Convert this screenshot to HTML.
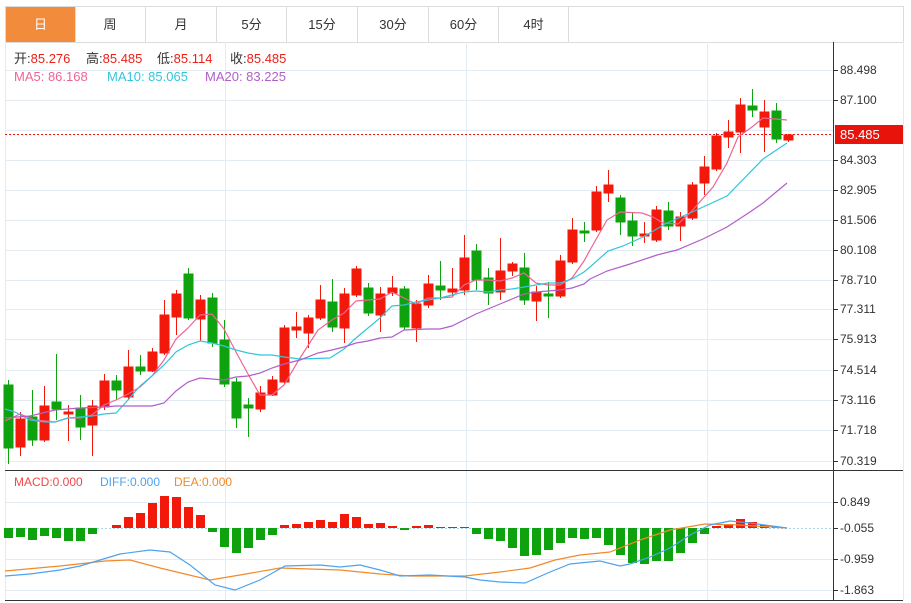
<!DOCTYPE html>
<html><head><meta charset="utf-8"><style>
body{margin:0;background:#fff;width:911px;height:603px;overflow:hidden;font-family:"Liberation Sans","Noto Sans CJK SC",sans-serif;}
.tabs{position:absolute;left:5px;top:6px;width:897px;height:35px;border:1px solid #dcdcdc;}
.tab{position:absolute;top:0;height:35px;line-height:35px;text-align:center;font-size:13px;color:#333;border-right:1px solid #dcdcdc;}
.tab.a{background:#f28c3c;color:#fff;}
svg{position:absolute;left:0;top:0}
</style></head><body>
<div class="tabs">
<div class="tab a" style="left:0;width:69px">日</div>
<div class="tab" style="left:69px;width:70px">周</div>
<div class="tab" style="left:140px;width:70px">月</div>
<div class="tab" style="left:211px;width:69px">5分</div>
<div class="tab" style="left:281px;width:70px">15分</div>
<div class="tab" style="left:352px;width:70px">30分</div>
<div class="tab" style="left:423px;width:69px">60分</div>
<div class="tab" style="left:493px;width:69px">4时</div>
</div>
<svg width="911" height="603" viewBox="0 0 911 603" font-family="Liberation Sans, Noto Sans CJK SC, sans-serif">
<g stroke="#e3ebf3" stroke-width="1">
<line x1="5" x2="833" y1="70.5" y2="70.5"/><line x1="5" x2="833" y1="100.5" y2="100.5"/><line x1="5" x2="833" y1="130.5" y2="130.5"/><line x1="5" x2="833" y1="160.5" y2="160.5"/><line x1="5" x2="833" y1="190.5" y2="190.5"/><line x1="5" x2="833" y1="220.5" y2="220.5"/><line x1="5" x2="833" y1="250.5" y2="250.5"/><line x1="5" x2="833" y1="280.5" y2="280.5"/><line x1="5" x2="833" y1="309.5" y2="309.5"/><line x1="5" x2="833" y1="339.5" y2="339.5"/><line x1="5" x2="833" y1="370.5" y2="370.5"/><line x1="5" x2="833" y1="400.5" y2="400.5"/><line x1="5" x2="833" y1="430.5" y2="430.5"/><line x1="5" x2="833" y1="461.5" y2="461.5"/>
<line x1="5" x2="833" y1="502.5" y2="502.5"/><line x1="5" x2="833" y1="559.5" y2="559.5"/><line x1="5" x2="833" y1="590.5" y2="590.5"/>
<line x1="225.5" x2="225.5" y1="42" y2="600"/><line x1="466.5" x2="466.5" y1="42" y2="600"/><line x1="707.5" x2="707.5" y1="42" y2="600"/>
<line x1="5.5" x2="5.5" y1="42" y2="600"/><line x1="903.5" x2="903.5" y1="42" y2="600"/>
</g>
<line x1="5" x2="833" y1="528.5" y2="528.5" stroke="#a8d8ee" stroke-dasharray="2,2"/>
<line x1="5" x2="903" y1="470.5" y2="470.5" stroke="#333"/>
<line x1="5" x2="903" y1="600.5" y2="600.5" stroke="#333"/>
<line x1="833.5" x2="833.5" y1="42" y2="600" stroke="#333"/>
<g stroke="#333"><line x1="833" x2="838" y1="70.5" y2="70.5"/><line x1="833" x2="838" y1="100.5" y2="100.5"/><line x1="833" x2="838" y1="160.5" y2="160.5"/><line x1="833" x2="838" y1="190.5" y2="190.5"/><line x1="833" x2="838" y1="220.5" y2="220.5"/><line x1="833" x2="838" y1="250.5" y2="250.5"/><line x1="833" x2="838" y1="280.5" y2="280.5"/><line x1="833" x2="838" y1="309.5" y2="309.5"/><line x1="833" x2="838" y1="339.5" y2="339.5"/><line x1="833" x2="838" y1="370.5" y2="370.5"/><line x1="833" x2="838" y1="400.5" y2="400.5"/><line x1="833" x2="838" y1="430.5" y2="430.5"/><line x1="833" x2="838" y1="461.5" y2="461.5"/><line x1="833" x2="838" y1="502.5" y2="502.5"/><line x1="833" x2="838" y1="528.5" y2="528.5"/><line x1="833" x2="838" y1="559.5" y2="559.5"/><line x1="833" x2="838" y1="590.5" y2="590.5"/></g>
<g font-size="12" fill="#333">
<text x="840" y="74">88.498</text><text x="840" y="104">87.100</text><text x="840" y="164">84.303</text><text x="840" y="194">82.905</text><text x="840" y="224">81.506</text><text x="840" y="254">80.108</text><text x="840" y="284">78.710</text><text x="840" y="313">77.311</text><text x="840" y="343">75.913</text><text x="840" y="374">74.514</text><text x="840" y="404">73.116</text><text x="840" y="434">71.718</text><text x="840" y="465">70.319</text>
<text x="840" y="506">0.849</text><text x="840" y="532">-0.055</text><text x="840" y="563">-0.959</text><text x="840" y="594">-1.863</text>
</g>
<line x1="5" x2="833" y1="134.5" y2="134.5" stroke="#f01010" stroke-dasharray="2,2"/>
<rect x="835" y="125" width="68" height="19" fill="#e8140c"/>
<text x="840" y="139" font-size="13" fill="#fff">85.485</text>
<g font-size="13">
<text x="14" y="63" fill="#333">开:<tspan fill="#f01e14">85.276</tspan></text>
<text x="86" y="63" fill="#333">高:<tspan fill="#f01e14">85.485</tspan></text>
<text x="157" y="63" fill="#333">低:<tspan fill="#f01e14">85.114</tspan></text>
<text x="230" y="63" fill="#333">收:<tspan fill="#f01e14">85.485</tspan></text>
<text x="14" y="81" fill="#f06493">MA5: 86.168</text>
<text x="107" y="81" fill="#33c5dc">MA10: 85.065</text>
<text x="205" y="81" fill="#b15ec9">MA20: 83.225</text>
</g>
<g font-size="12">
<text x="14" y="486" fill="#f04848">MACD:0.000</text>
<text x="100" y="486" fill="#4da3ef">DIFF:0.000</text>
<text x="174" y="486" fill="#f08a2a">DEA:0.000</text>
</g>
<g stroke-width="1">
<g stroke="#0ea20e" fill="#0ea20e">
<line x1="8.5" x2="8.5" y1="380" y2="464"/><rect x="4" y="385" width="9" height="63"/>
<line x1="32.5" x2="32.5" y1="390" y2="446"/><rect x="28" y="417" width="9" height="23"/>
<line x1="56.5" x2="56.5" y1="354" y2="420"/><rect x="52" y="402" width="9" height="7"/>
<line x1="80.5" x2="80.5" y1="395" y2="440"/><rect x="76" y="408" width="9" height="19"/>
<line x1="116.5" x2="116.5" y1="375" y2="400"/><rect x="112" y="381" width="9" height="9"/>
<line x1="140.5" x2="140.5" y1="355" y2="375"/><rect x="136" y="367" width="9" height="4"/>
<line x1="188.5" x2="188.5" y1="268" y2="320"/><rect x="184" y="274" width="9" height="44"/>
<line x1="212.5" x2="212.5" y1="293" y2="347"/><rect x="208" y="298" width="9" height="45"/>
<line x1="224.5" x2="224.5" y1="320" y2="387"/><rect x="220" y="340" width="9" height="44"/>
<line x1="236.5" x2="236.5" y1="378" y2="428"/><rect x="232" y="382" width="9" height="36"/>
<line x1="248.5" x2="248.5" y1="398" y2="437"/><rect x="244" y="405" width="9" height="3"/>
<line x1="332.5" x2="332.5" y1="279" y2="332"/><rect x="328" y="302" width="9" height="25"/>
<line x1="368.5" x2="368.5" y1="283" y2="316"/><rect x="364" y="288" width="9" height="25"/>
<line x1="404.5" x2="404.5" y1="286" y2="330"/><rect x="400" y="289" width="9" height="38"/>
<line x1="440.5" x2="440.5" y1="261" y2="300"/><rect x="436" y="286" width="9" height="4"/>
<line x1="476.5" x2="476.5" y1="244" y2="290"/><rect x="472" y="251" width="9" height="29"/>
<line x1="488.5" x2="488.5" y1="268" y2="305"/><rect x="484" y="278" width="9" height="15"/>
<line x1="524.5" x2="524.5" y1="253" y2="305"/><rect x="520" y="268" width="9" height="32"/>
<line x1="548.5" x2="548.5" y1="282" y2="318"/><rect x="544" y="294" width="9" height="2"/>
<line x1="584.5" x2="584.5" y1="222" y2="242"/><rect x="580" y="231" width="9" height="2"/>
<line x1="620.5" x2="620.5" y1="195" y2="235"/><rect x="616" y="198" width="9" height="24"/>
<line x1="632.5" x2="632.5" y1="213" y2="246"/><rect x="628" y="221" width="9" height="15"/>
<line x1="668.5" x2="668.5" y1="202" y2="230"/><rect x="664" y="211" width="9" height="15"/>
<line x1="752.5" x2="752.5" y1="89" y2="117"/><rect x="748" y="106" width="9" height="4"/>
<line x1="776.5" x2="776.5" y1="103" y2="143"/><rect x="772" y="111" width="9" height="28"/>
</g>
<g stroke="#f2190b" fill="#f2190b">
<line x1="20.5" x2="20.5" y1="412" y2="456"/><rect x="16" y="419" width="9" height="28"/>
<line x1="44.5" x2="44.5" y1="386" y2="442"/><rect x="40" y="406" width="9" height="34"/>
<line x1="68.5" x2="68.5" y1="405" y2="441"/><rect x="64" y="412" width="9" height="2"/>
<line x1="92.5" x2="92.5" y1="400" y2="456"/><rect x="88" y="406" width="9" height="19"/>
<line x1="104.5" x2="104.5" y1="374" y2="410"/><rect x="100" y="381" width="9" height="26"/>
<line x1="128.5" x2="128.5" y1="350" y2="400"/><rect x="124" y="367" width="9" height="30"/>
<line x1="152.5" x2="152.5" y1="348" y2="372"/><rect x="148" y="352" width="9" height="19"/>
<line x1="164.5" x2="164.5" y1="300" y2="355"/><rect x="160" y="315" width="9" height="38"/>
<line x1="176.5" x2="176.5" y1="290" y2="335"/><rect x="172" y="294" width="9" height="23"/>
<line x1="200.5" x2="200.5" y1="295" y2="341"/><rect x="196" y="300" width="9" height="19"/>
<line x1="260.5" x2="260.5" y1="386" y2="412"/><rect x="256" y="393" width="9" height="16"/>
<line x1="272.5" x2="272.5" y1="376" y2="396"/><rect x="268" y="380" width="9" height="15"/>
<line x1="284.5" x2="284.5" y1="325" y2="384"/><rect x="280" y="328" width="9" height="54"/>
<line x1="296.5" x2="296.5" y1="312" y2="338"/><rect x="292" y="327" width="9" height="3"/>
<line x1="308.5" x2="308.5" y1="315" y2="348"/><rect x="304" y="318" width="9" height="15"/>
<line x1="320.5" x2="320.5" y1="285" y2="320"/><rect x="316" y="300" width="9" height="18"/>
<line x1="344.5" x2="344.5" y1="288" y2="343"/><rect x="340" y="294" width="9" height="34"/>
<line x1="356.5" x2="356.5" y1="266" y2="297"/><rect x="352" y="269" width="9" height="26"/>
<line x1="380.5" x2="380.5" y1="287" y2="332"/><rect x="376" y="294" width="9" height="21"/>
<line x1="392.5" x2="392.5" y1="276" y2="296"/><rect x="388" y="288" width="9" height="5"/>
<line x1="416.5" x2="416.5" y1="300" y2="342"/><rect x="412" y="304" width="9" height="24"/>
<line x1="428.5" x2="428.5" y1="275" y2="308"/><rect x="424" y="284" width="9" height="21"/>
<line x1="452.5" x2="452.5" y1="268" y2="296"/><rect x="448" y="289" width="9" height="3"/>
<line x1="464.5" x2="464.5" y1="235" y2="295"/><rect x="460" y="258" width="9" height="32"/>
<line x1="500.5" x2="500.5" y1="238" y2="300"/><rect x="496" y="271" width="9" height="21"/>
<line x1="512.5" x2="512.5" y1="262" y2="276"/><rect x="508" y="264" width="9" height="7"/>
<line x1="536.5" x2="536.5" y1="286" y2="321"/><rect x="532" y="292" width="9" height="9"/>
<line x1="560.5" x2="560.5" y1="255" y2="298"/><rect x="556" y="261" width="9" height="35"/>
<line x1="572.5" x2="572.5" y1="218" y2="264"/><rect x="568" y="230" width="9" height="32"/>
<line x1="596.5" x2="596.5" y1="186" y2="232"/><rect x="592" y="192" width="9" height="38"/>
<line x1="608.5" x2="608.5" y1="170" y2="202"/><rect x="604" y="185" width="9" height="8"/>
<line x1="644.5" x2="644.5" y1="222" y2="243"/><rect x="640" y="234" width="9" height="2"/>
<line x1="656.5" x2="656.5" y1="206" y2="242"/><rect x="652" y="210" width="9" height="30"/>
<line x1="680.5" x2="680.5" y1="212" y2="241"/><rect x="676" y="217" width="9" height="9"/>
<line x1="692.5" x2="692.5" y1="182" y2="220"/><rect x="688" y="185" width="9" height="33"/>
<line x1="704.5" x2="704.5" y1="156" y2="195"/><rect x="700" y="167" width="9" height="16"/>
<line x1="716.5" x2="716.5" y1="133" y2="171"/><rect x="712" y="136" width="9" height="33"/>
<line x1="728.5" x2="728.5" y1="120" y2="148"/><rect x="724" y="132" width="9" height="5"/>
<line x1="740.5" x2="740.5" y1="98" y2="153"/><rect x="736" y="105" width="9" height="27"/>
<line x1="764.5" x2="764.5" y1="100" y2="152"/><rect x="760" y="112" width="9" height="15"/>
<line x1="788.5" x2="788.5" y1="134" y2="142"/><rect x="784" y="135" width="9" height="5"/>
</g>
</g>
<g fill="none" stroke-width="1.2">
<polyline stroke="#f06493" points="5,421 20,414 35,420 55,422 68,418 80,418 92,415 104,405 116,400 128,394 140,387 152,376 164,360 176,339 188,328 200,315 212,314 224,329 236,352 248,374 260,395 272,395 284,385 300,358 318,330 332,320 344,313 356,301 368,300 380,299 392,292 404,298 416,304 428,298 440,298 452,297 464,285 476,280 488,280 500,281 512,278 524,273 536,283 548,285 560,285 572,278 584,261 590,250 607,220 620,212 642,213 653,217 663,223 678,224 690,213 713,187 727,163 738,137 752,127 763,118 787,120"/>
<polyline stroke="#33c5dc" points="5,409 15,412 30,420 45,422 55,422 68,418 92,416 104,414 116,413 128,400 140,386 152,376 164,365 176,352 188,345 200,341 212,343 224,346 236,350 248,353 260,355 272,355 284,357 300,359 330,358 344,349 356,338 368,328 380,318 392,306 404,305 416,302 428,300 440,298 452,295 464,292 476,291 488,292 500,290 512,289 524,287 536,285 548,283 560,283 572,279 584,272 590,267 608,251 623,246 643,237 667,223 690,213 727,196 763,159 787,143"/>
<polyline stroke="#b15ec9" points="5,418 30,416 55,410 80,408 104,407 116,406 152,406 164,403 176,391 188,382 200,378 212,379 224,380 236,377 248,376 260,373 272,368 284,364 300,360 318,353 332,350 344,347 356,343 368,341 380,338 392,337 404,330 428,329 440,329 452,326 464,320 476,314 488,309 500,304 512,299 524,294 536,292 560,290 572,288 584,284 590,279 607,271 630,264 657,255 677,250 703,239 727,227 750,212 763,203 787,183"/>
</g>
<g fill="#0ea20e">
<rect x="4" y="528" width="9" height="10"/><rect x="16" y="528" width="9" height="9"/><rect x="28" y="528" width="9" height="12"/><rect x="40" y="528" width="9" height="8"/><rect x="52" y="528" width="9" height="10"/><rect x="64" y="528" width="9" height="13"/><rect x="76" y="528" width="9" height="13"/><rect x="88" y="528" width="9" height="6"/>
<rect x="208" y="528" width="9" height="4"/><rect x="220" y="528" width="9" height="19"/><rect x="232" y="528" width="9" height="25"/><rect x="244" y="528" width="9" height="20"/><rect x="256" y="528" width="9" height="12"/><rect x="268" y="528" width="9" height="7"/>
<rect x="400" y="528" width="9" height="2"/>
<rect x="472" y="528" width="9" height="6"/><rect x="484" y="528" width="9" height="11"/><rect x="496" y="528" width="9" height="13"/><rect x="508" y="528" width="9" height="20"/><rect x="520" y="528" width="9" height="28"/><rect x="532" y="528" width="9" height="27"/><rect x="544" y="528" width="9" height="22"/><rect x="556" y="528" width="9" height="15"/><rect x="568" y="528" width="9" height="10"/><rect x="580" y="528" width="9" height="11"/><rect x="592" y="528" width="9" height="10"/><rect x="604" y="528" width="9" height="17"/><rect x="616" y="528" width="9" height="27"/><rect x="628" y="528" width="9" height="35"/><rect x="640" y="528" width="9" height="36"/><rect x="652" y="528" width="9" height="33"/><rect x="664" y="528" width="9" height="33"/><rect x="676" y="528" width="9" height="25"/><rect x="688" y="528" width="9" height="15"/><rect x="700" y="528" width="9" height="6"/>
</g>
<g fill="#f2190b">
<rect x="112" y="525" width="9" height="3"/><rect x="124" y="517" width="9" height="11"/><rect x="136" y="513" width="9" height="15"/><rect x="148" y="503" width="9" height="25"/><rect x="160" y="496" width="9" height="32"/><rect x="172" y="497" width="9" height="31"/><rect x="184" y="507" width="9" height="21"/><rect x="196" y="515" width="9" height="13"/>
<rect x="280" y="525" width="9" height="3"/><rect x="292" y="524" width="9" height="4"/><rect x="304" y="522" width="9" height="6"/><rect x="316" y="520" width="9" height="8"/><rect x="328" y="522" width="9" height="6"/><rect x="340" y="514" width="9" height="14"/><rect x="352" y="517" width="9" height="11"/><rect x="364" y="524" width="9" height="4"/><rect x="376" y="523" width="9" height="5"/><rect x="388" y="526" width="9" height="2"/><rect x="412" y="526" width="9" height="2"/><rect x="424" y="525" width="9" height="3"/><rect x="436" y="527" width="9" height="1"/><rect x="448" y="527" width="9" height="1"/><rect x="460" y="527" width="9" height="1"/>
<rect x="712" y="526" width="9" height="2"/><rect x="724" y="524" width="9" height="4"/><rect x="736" y="519" width="9" height="9"/><rect x="748" y="522" width="9" height="6"/><rect x="760" y="525" width="9" height="3"/><rect x="772" y="527" width="9" height="1"/>
</g>
<g fill="none" stroke-width="1.2">
<polyline stroke="#f08a2a" points="5,571 60,566 105,561 130,560 160,568 210,580 240,575 280,568 340,570 380,574 410,576 465,576 500,572 530,568 555,560 580,555 610,552 640,540 670,530 705,524 740,525 787,528"/>
<polyline stroke="#4da3ef" points="5,576 30,574 60,570 80,566 100,560 120,554 150,550 170,552 190,565 215,585 235,590 260,580 285,566 320,565 340,567 360,565 380,570 400,576 430,575 465,577 480,580 500,582 525,583 550,572 570,564 600,561 620,566 630,564 650,557 670,548 690,535 710,525 730,521 750,523 787,528"/>
</g>
</svg>
</body></html>
